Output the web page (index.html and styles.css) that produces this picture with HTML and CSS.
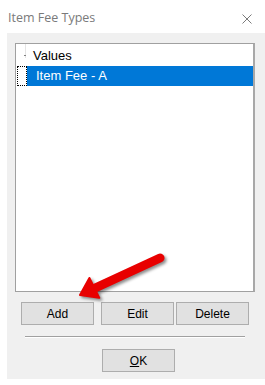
FILE: index.html
```html
<!DOCTYPE html>
<html lang="en">
<head>
    <meta charset="UTF-8">
    <title>Item Fee Types</title>
    <link rel="stylesheet" href="styles.css">
</head>
<body>
    <div class="titlebar">
        <span class="title-text">Item Fee Types</span>
        <svg class="close-btn" width="10" height="10" viewBox="0 0 10 10">
            <path d="M0.5 0.5 L9.5 9.5 M9.5 0.5 L0.5 9.5" stroke="#7a7a7a" stroke-width="1" fill="none"/>
        </svg>
    </div>
    <div class="client">
        <!-- list of values -->
        <div class="listbox">
            <div class="list-header">
                <span class="tick"></span>
                <span class="header-text">Values</span>
            </div>
            <div class="list-row">
                <span class="focus-box"></span>
                <span class="row-selected">Item Fee - A</span>
            </div>
        </div>
        <div class="button-row">
            <button class="btn">Add</button>
            <button class="btn btn-edit">Edit</button>
            <button class="btn btn-delete">Delete</button>
        </div>
        <div class="separator"></div>
        <div class="ok-row">
            <button class="btn"><u>O</u>K</button>
        </div>
    </div>
    <!-- annotation arrow -->
    <svg class="arrow" width="265" height="385" viewBox="0 0 265 385">
        <line x1="160" y1="258" x2="93" y2="289" stroke="#e80000" stroke-width="9" stroke-linecap="round"/>
        <polygon points="80,295 89.4,278 99.2,297.8" fill="#e80000" stroke="#e80000" stroke-width="2" stroke-linejoin="round"/>
    </svg>
</body>
</html>
```

FILE: styles.css
```css
body {
    margin: 0;
    background: #ffffff;
    font-family: "Liberation Sans", Arial, sans-serif;
    width: 265px;
    height: 385px;
    overflow: hidden;
}

/* title bar */
.titlebar {
    height: 33px;
    display: flex;
    align-items: center;
    justify-content: space-between;
    padding: 0 13px 0 8px;
}

.title-text {
    font-family: "Open Sans", sans-serif;
    font-size: 12.5px;
    color: #7a7a7a;
    margin-top: 2px;
}

.close-btn {
    display: block;
    margin-top: 4px;
}

/* gray dialog area */
.client {
    margin-left: 7px;
    height: 346px;
    background: #f0f0f0;
    padding: 10px 0 0 8px;
    box-sizing: border-box;
}

.listbox {
    width: 240px;
    height: 249px;
    box-sizing: border-box;
    background: #ffffff;
    border: 1px solid #a0a0a0;
    border-right: 2px solid #a8a8a8;
    font-size: 13px;
}

.list-header {
    height: 22px;
    display: flex;
    align-items: center;
    position: relative;
}

.tick {
    width: 1px;
    height: 14px;
    background: #e4e4e4;
    margin-left: 9px;
    align-self: flex-start;
    position: relative;
}

.tick::after {
    content: "";
    position: absolute;
    left: -1px;
    top: 11px;
    width: 2px;
    height: 1px;
    background: #808080;
}

.header-text {
    margin-left: 7px;
    color: #000000;
}

.list-row {
    height: 20px;
    display: flex;
    align-items: stretch;
}

.focus-box {
    width: 8px;
    margin-left: 1px;
    height: 18px;
    border: 1px dotted #000000;
}

.row-selected {
    flex: 1;
    background: #0078d7;
    color: #ffffff;
    padding-left: 9px;
    line-height: 20px;
}

/* buttons */
.button-row {
    display: flex;
    margin: 10px 0 0 6px;
}

.btn {
    width: 73px;
    height: 23px;
    box-sizing: border-box;
    background: #e1e1e1;
    border: 1px solid #adadad;
    border-radius: 0;
    font-family: "Liberation Sans", Arial, sans-serif;
    font-size: 12px;
    color: #000000;
    padding: 0;
}

.btn-edit {
    margin-left: 7px;
}

.btn-delete {
    margin-left: 2px;
}

.separator {
    width: 220px;
    margin: 11px 0 0 10px;
    border-top: 1px solid #a0a0a0;
    border-bottom: 1px solid #ffffff;
}

.ok-row {
    margin: 11px 0 0 87px;
}

.arrow {
    position: absolute;
    top: 0;
    left: 0;
    filter: drop-shadow(2px 2px 1.5px rgba(0,0,0,0.45));
}
```
